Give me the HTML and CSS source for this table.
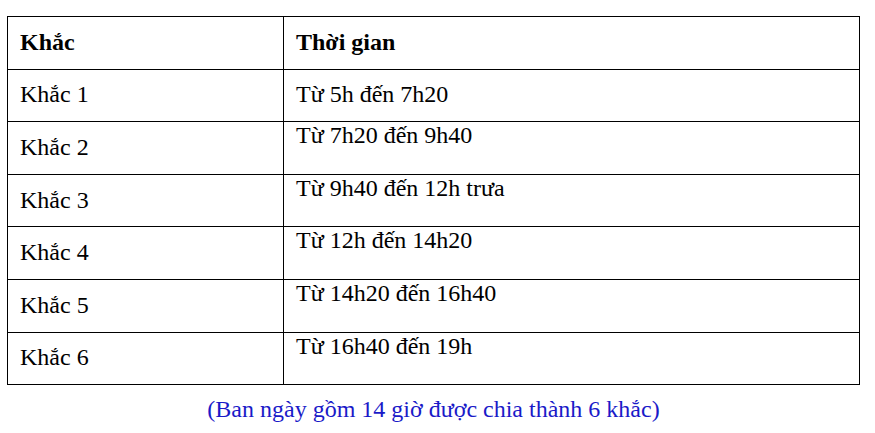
FILE: index.html
```html
<!DOCTYPE html>
<html lang="vi">
<head>
<meta charset="utf-8">
<link rel="stylesheet" href="styles.css">
</head>
<body>
<div class="page">
  <table class="khac-table">
    <colgroup><col class="col-a"><col class="col-b"></colgroup>
    <tr class="head"><th>Khắc</th><th>Thời gian</th></tr>
    <tr><td>Khắc 1</td><td class="mid">Từ 5h đến 7h20</td></tr>
    <tr><td>Khắc 2</td><td class="top">Từ 7h20 đến 9h40</td></tr>
    <tr><td>Khắc 3</td><td class="top">Từ 9h40 đến 12h trưa</td></tr>
    <tr><td>Khắc 4</td><td class="top">Từ 12h đến 14h20</td></tr>
    <tr><td>Khắc 5</td><td class="top">Từ 14h20 đến 16h40</td></tr>
    <tr><td>Khắc 6</td><td class="top">Từ 16h40 đến 19h</td></tr>
  </table>
  <p class="caption">(Ban ngày gồm 14 giờ được chia thành 6 khắc)</p>
</div>
</body>
</html>
```

FILE: styles.css
```css
html, body {
  margin: 0;
  padding: 0;
  background: #ffffff;
}
.page {
  padding: 16px 0 0 7px;
  width: 853px;
  font-family: "Liberation Serif", "Times New Roman", serif;
  color: #000;
}
.khac-table {
  border-collapse: collapse;
  width: 853px;
  table-layout: fixed;
  font-size: 24px;
  line-height: 26px;
}
.col-a { width: 276px; }
.khac-table th,
.khac-table td {
  border: 1.5px solid #000;
  padding: 0 12px 2px;
  text-align: left;
  vertical-align: middle;
  height: 52.6px;
  box-sizing: border-box;
}
.khac-table th { font-weight: bold; }
.khac-table td.top { vertical-align: top; padding-top: 0; padding-bottom: 0; }
.khac-table td.mid { vertical-align: middle; }
.caption {
  margin: 11px 0 0;
  text-align: center;
  color: #1a1ac8;
  font-size: 24px;
  line-height: 26px;
}
```
